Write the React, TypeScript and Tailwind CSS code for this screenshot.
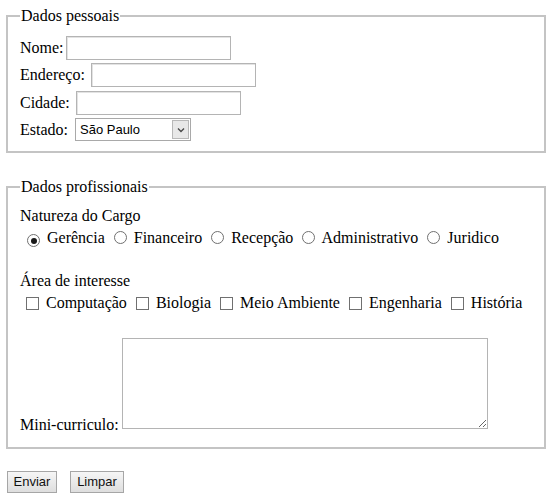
const cargos = ["Gerência", "Financeiro", "Recepção", "Administrativo", "Juridico"]
const areas = ["Computação", "Biologia", "Meio Ambiente", "Engenharia", "História"]

function TextBox() {
  return (
    <span className="ml-[2px] inline-block h-[24px] w-[165px] border border-[#b4b4b4] bg-white align-middle shadow-[inset_1px_1px_0_#e3e3e3]" />
  )
}

function Radio({ checked }: { checked?: boolean }) {
  return (
    <span className="ml-[5px] mr-[3px] inline-flex h-[13px] w-[13px] items-center justify-center rounded-full border border-[#707070] bg-white align-[-1px]">
      {checked && <span className="h-[6px] w-[6px] rounded-full bg-[#1a1a1a]" />}
    </span>
  )
}

function Check() {
  return (
    <span className="ml-[5px] mr-[3px] inline-block h-[13px] w-[13px] border border-[#707070] bg-white align-[-2px]" />
  )
}

export default function App() {
  return (
    <div className="min-h-[499px] w-[552px] bg-white px-[6px] pt-[7px] font-[Liberation_Serif,serif] text-[16px] leading-[18px] text-black">
      <fieldset className="w-[540px] border-2 border-[#c4c4c4] px-[12px] pb-[8px] pt-[9px]">
        <legend className="px-[1px] leading-[18px]">Dados pessoais</legend>
        <div className="flex flex-col">
          <div className="flex h-[27px] items-center whitespace-pre">
            Nome:<TextBox />
          </div>
          <div className="flex h-[28px] items-center whitespace-pre">
            Endereço: <TextBox />
          </div>
          <div className="flex h-[27px] items-center whitespace-pre">
            Cidade: <TextBox />
          </div>
          <div className="flex h-[27px] items-center whitespace-pre">
            Estado:{" "}
            <span className="ml-[3px] flex h-[23px] w-[116px] items-center border border-[#a9a9a9] bg-white pl-[4px] font-[Liberation_Sans,Arial,sans-serif] text-[13px]">
              <span className="flex-1">São Paulo</span>
              <span className="mr-[1px] flex h-[19px] w-[17px] items-center justify-center border border-[#b8b8b8] bg-[#e8e8e8]">
                <svg width="8" height="6" viewBox="0 0 8 6">
                  <path d="M1 1.5 L4 4.5 L7 1.5" fill="none" stroke="#4a4a4a" strokeWidth="1.4" />
                </svg>
              </span>
            </span>
          </div>
        </div>
      </fieldset>

      <fieldset className="mt-[25px] w-[540px] border-2 border-[#c4c4c4] px-[12px] pb-[18px] pt-[9px]">
        <legend className="px-[1px] leading-[18px]">Dados profissionais</legend>
        <div className="flex h-[22px] items-center">Natureza do Cargo</div>
        <div className="flex h-[22px] items-center whitespace-pre">
          {cargos.map((c, i) => (
            <span key={c} className={i === 0 ? "ml-[2px]" : ""}>
              <Radio checked={i === 0} /> {c}{" "}
            </span>
          ))}
        </div>
        <div className="mt-[21px] flex h-[22px] items-center">Área de interesse</div>
        <div className="flex h-[22px] items-center whitespace-pre">
          {areas.map((a, i) => (
            <span key={a} className={i === 0 ? "ml-[1px]" : ""}>
              <Check /> {a}{" "}
            </span>
          ))}
        </div>
        <div className="mt-[24px] flex items-end gap-[3px]">
          <span className="-mb-[5px]">Mini-curriculo:</span>
          <textarea className="h-[91px] w-[366px] border border-[#b4b4b4] bg-white" />
        </div>
      </fieldset>

      <div className="mt-[22px] flex gap-[13px] font-[Liberation_Sans,Arial,sans-serif] text-[13px]">
        <button className="ml-[1px] h-[22px] w-[50px] border border-[#a6a6a6] bg-gradient-to-b from-[#f6f6f6] to-[#dedede] text-[#111]">
          Enviar
        </button>
        <button className="h-[22px] w-[54px] border border-[#a6a6a6] bg-gradient-to-b from-[#f6f6f6] to-[#dedede] text-[#111]">
          Limpar
        </button>
      </div>
    </div>
  )
}
